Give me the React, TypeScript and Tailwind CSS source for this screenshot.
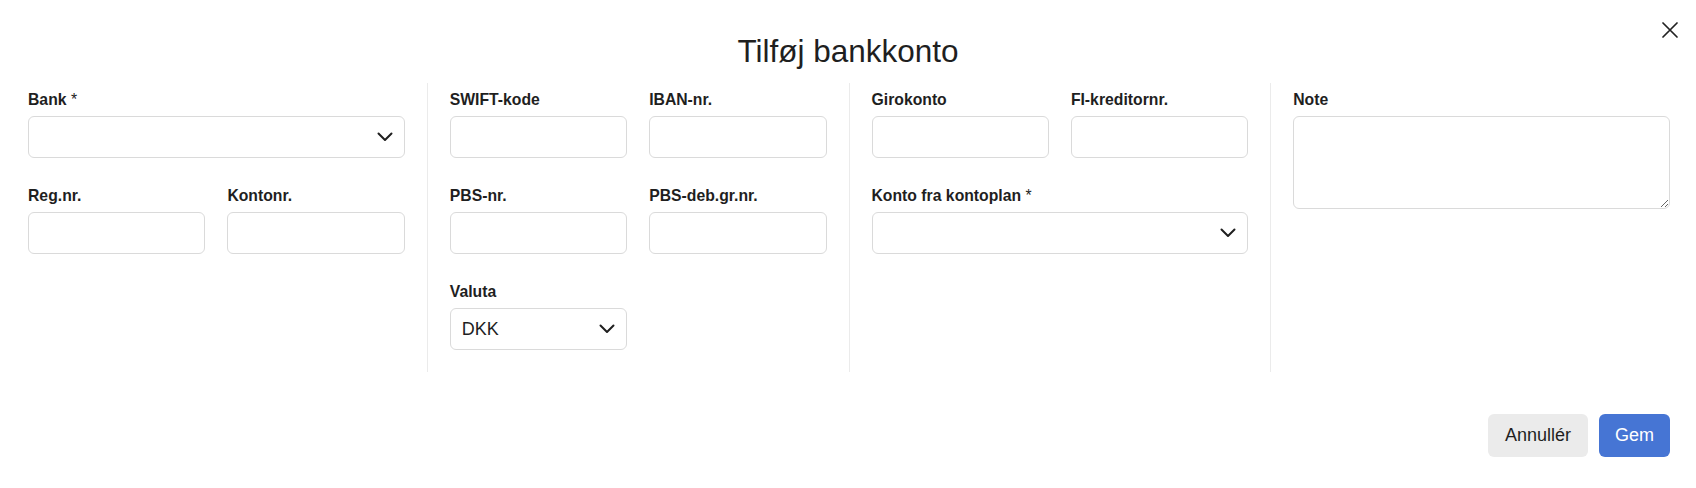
type FieldProps = {
  label: string;
  required?: boolean;
};

const Chevron = ({ className }: { className: string }) => (
  <svg
    className={className}
    width="16"
    height="10"
    viewBox="0 0 16 10"
    fill="none"
    stroke="#1f1f1f"
    strokeWidth="2"
    strokeLinecap="round"
    strokeLinejoin="round"
  >
    <path d="M1.5 1.5 L8 8 L14.5 1.5" />
  </svg>
);

const Label = ({ label, required }: FieldProps) => (
  <label className="block text-[15.75px] font-bold leading-[18px] text-[#1f1f1f] mb-[7px] whitespace-nowrap">
    {label}
    {required && <span className="font-normal"> *</span>}
  </label>
);

const TextField = ({ label }: FieldProps) => (
  <div className="min-w-0">
    <Label label={label} />
    <input
      type="text"
      className="block w-full h-[42px] border border-[#dadada] rounded-[6px] bg-white px-3 outline-none"
    />
  </div>
);

const SelectField = ({ label, required, value }: FieldProps & { value?: string }) => (
  <div className="min-w-0">
    <Label label={label} required={required} />
    <div className="relative">
      <select
        defaultValue={value ?? ""}
        className="block w-full h-[42px] appearance-none border border-[#dadada] rounded-[6px] bg-white pl-[11px] pr-10 text-[18px] text-[#1f1f1f] outline-none"
      >
        <option value=""></option>
        {value && <option value={value}>{value}</option>}
      </select>
      <Chevron className="absolute right-[12px] top-[16px] pointer-events-none" />
    </div>
  </div>
);

export default function App() {
  return (
    <div className="relative w-full h-[488px] bg-white font-['Liberation_Sans',Arial,sans-serif] text-[#1f1f1f]">
      {/* Close */}
      <button type="button" className="absolute top-[22px] right-[18px] w-4 h-4 flex items-center justify-center">
        <svg width="16" height="16" viewBox="0 0 16 16" fill="none" stroke="#222" strokeWidth="1.7" strokeLinecap="round">
          <path d="M1 1 L15 15 M15 1 L1 15" />
        </svg>
      </button>

      {/* Title */}
      <h2 className="pt-[33px] text-center text-[31.5px] leading-[36px] font-normal">Tilføj bankkonto</h2>

      {/* Columns */}
      <div className="flex mt-[14px] pl-[28px] pr-[26px]">
        <div className="flex-1 min-w-0 pt-[8px] pb-[22px] pr-[22px] flex flex-col gap-[29px]">
          <SelectField label="Bank" required />
          <div className="grid grid-cols-2 gap-x-[22px]">
            <TextField label="Reg.nr." />
            <TextField label="Kontonr." />
          </div>
        </div>

        <div className="flex-1 min-w-0 pt-[8px] pb-[22px] px-[22px] border-l border-[#ebebeb] grid grid-cols-2 gap-x-[22px] gap-y-[29px] content-start">
          <TextField label="SWIFT-kode" />
          <TextField label="IBAN-nr." />
          <TextField label="PBS-nr." />
          <TextField label="PBS-deb.gr.nr." />
          <SelectField label="Valuta" value="DKK" />
        </div>

        <div className="flex-1 min-w-0 pt-[8px] pb-[22px] px-[22px] border-l border-[#ebebeb] flex flex-col gap-[29px]">
          <div className="grid grid-cols-2 gap-x-[22px]">
            <TextField label="Girokonto" />
            <TextField label="FI-kreditornr." />
          </div>
          <SelectField label="Konto fra kontoplan" required />
        </div>

        <div className="flex-1 min-w-0 pt-[8px] pb-[22px] pl-[22px] border-l border-[#ebebeb]">
          <Label label="Note" />
          <textarea className="block w-full h-[93px] border border-[#dadada] rounded-[6px] bg-white px-3 py-2 outline-none" />
        </div>
      </div>

      {/* Footer */}
      <div className="flex justify-end gap-[11px] mt-[42px] pr-[26px]">
        <button type="button" className="h-[43px] px-[17px] rounded-[6px] bg-[#ebebeb] text-[18px] text-[#1f1f1f]">
          Annullér
        </button>
        <button type="button" className="h-[43px] px-[16px] rounded-[6px] bg-[#4675d4] text-[18px] text-white">
          Gem
        </button>
      </div>
    </div>
  );
}
